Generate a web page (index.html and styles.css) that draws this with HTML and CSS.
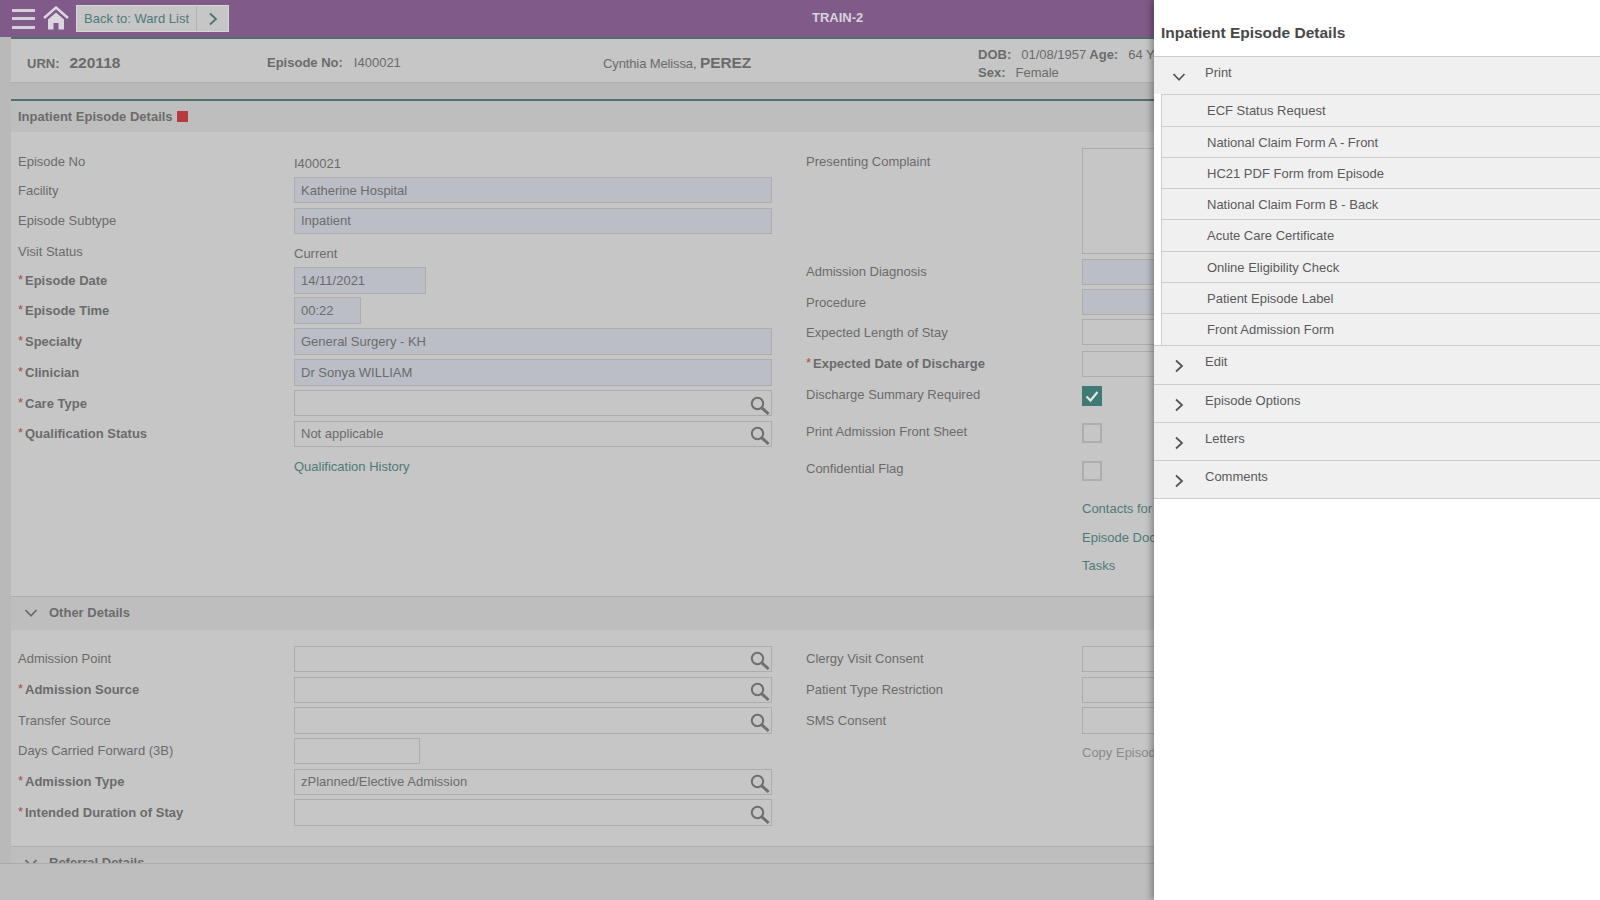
FILE: index.html
```html
<!DOCTYPE html>
<html lang="en">
<head>
    <meta charset="UTF-8">
    <meta name="viewport" content="width=device-width, initial-scale=1.0">
    <title>Inpatient Episode Details</title>
    <link rel="stylesheet" href="styles.css">
</head>
<body>
    <svg class="icon-defs" width="0" height="0" aria-hidden="true">
        <symbol id="search" viewBox="0 0 20 20">
            <circle cx="7.5" cy="7.5" r="5.7" fill="none" stroke="currentColor" stroke-width="2"/>
            <path d="M11.8 11.8 L18.6 18" fill="none" stroke="currentColor" stroke-width="3"/>
        </symbol>
        <symbol id="chev-down" viewBox="0 0 14 14">
            <path d="M1.5 4 L7 9.8 L12.5 4" fill="none" stroke="currentColor" stroke-width="1.8"/>
        </symbol>
        <symbol id="chev-right" viewBox="0 0 14 14">
            <path d="M4 1.5 L10 7 L4 12.5" fill="none" stroke="currentColor" stroke-width="1.8"/>
        </symbol>
    </svg>

    <header class="topbar">
        <div class="menu-btn"><span></span><span></span><span></span></div>
        <svg class="home" viewBox="0 0 26 24" width="26" height="24">
            <path d="M1 12 L13 1.5 L25 12" fill="none" stroke="currentColor" stroke-width="2.4"/>
            <path d="M5 13.5 L13 6.5 L21 13.5 V23.5 H15.5 V17 H10.5 V23.5 H5 Z" fill="currentColor"/>
        </svg>
        <div class="back-btn">
            <span class="back-label">Back to: Ward List</span>
            <span class="back-arrow"><svg width="14" height="14"><use href="#chev-right"/></svg></span>
        </div>
        <div class="env-name">TRAIN-2</div>
    </header>

    <main class="page">
        <div class="patient-bar">
            <div class="pt-urn"><b class="pt-key">URN:</b><b class="pt-big">220118</b></div>
            <div class="pt-episode"><b class="pt-key">Episode No:</b><span>I400021</span></div>
            <div class="pt-name">Cynthia Melissa, <b class="pt-big">PEREZ</b></div>
            <div class="pt-demo">
                <div><b class="pt-key">DOB:</b><span class="pt-val">01/08/1957</span><b class="pt-key">Age:</b><span class="pt-val">64 Years</span></div>
                <div><b class="pt-key">Sex:</b><span class="pt-val">Female</span></div>
            </div>
        </div>
        <div class="bar-gap"></div>

        <section class="episode">
            <h2 class="section-head first">Inpatient Episode Details <i class="red-flag"></i></h2>
            <div class="details">
                <div class="form-col main-left">
                    <div class="row"><label>Episode No</label><span class="value">I400021</span></div>
                    <div class="row"><label>Facility</label><div class="field filled">Katherine Hospital</div></div>
                    <div class="row up"><label>Episode Subtype</label><div class="field filled">Inpatient</div></div>
                    <div class="row"><label>Visit Status</label><span class="value">Current</span></div>
                    <div class="row h27"><label class="req">Episode Date</label><div class="field filled w-date">14/11/2021</div></div>
                    <div class="row h27"><label class="req">Episode Time</label><div class="field filled w-time">00:22</div></div>
                    <div class="row h27"><label class="req">Specialty</label><div class="field filled">General Surgery - KH</div></div>
                    <div class="row h27"><label class="req">Clinician</label><div class="field filled">Dr Sonya WILLIAM</div></div>
                    <div class="row"><label class="req">Care Type</label><div class="field"><svg class="search"><use href="#search"/></svg></div></div>
                    <div class="row up"><label class="req">Qualification Status</label><div class="field">Not applicable<svg class="search"><use href="#search"/></svg></div></div>
                    <div class="row up"><span></span><a class="link">Qualification History</a></div>
                </div>
                <div class="form-col main-right">
                    <div class="row tall"><label>Presenting Complaint</label><div class="field area"></div></div>
                    <div class="row up"><label>Admission Diagnosis</label><div class="field filled"></div></div>
                    <div class="row"><label>Procedure</label><div class="field filled"></div></div>
                    <div class="row"><label>Expected Length of Stay</label><div class="field"></div></div>
                    <div class="row up"><label class="req">Expected Date of Discharge</label><div class="field"></div></div>
                    <div class="row check"><label>Discharge Summary Required</label><div class="box on"><svg viewBox="0 0 20 20" width="20" height="20"><path d="M4.5 10.5 L8.5 14.5 L15.5 6" fill="none" stroke="#dfe6e5" stroke-width="2.2"/></svg></div></div>
                    <div class="row check"><label>Print Admission Front Sheet</label><div class="box"></div></div>
                    <div class="row check up"><label>Confidential Flag</label><div class="box"></div></div>
                    <div class="row"><span></span><a class="link">Contacts for Episode</a></div>
                    <div class="row"><span></span><a class="link">Episode Documents</a></div>
                    <div class="row"><span></span><a class="link">Tasks</a></div>
                </div>
            </div>

            <h2 class="section-head"><svg class="head-chev"><use href="#chev-down"/></svg>Other Details</h2>
            <div class="details other">
                <div class="form-col other-left">
                    <div class="row up"><label>Admission Point</label><div class="field"><svg class="search"><use href="#search"/></svg></div></div>
                    <div class="row up"><label class="req">Admission Source</label><div class="field"><svg class="search"><use href="#search"/></svg></div></div>
                    <div class="row h27"><label>Transfer Source</label><div class="field"><svg class="search"><use href="#search"/></svg></div></div>
                    <div class="row up"><label>Days Carried Forward (3B)</label><div class="field w-days"></div></div>
                    <div class="row up"><label class="req">Admission Type</label><div class="field">zPlanned/Elective Admission<svg class="search"><use href="#search"/></svg></div></div>
                    <div class="row h27"><label class="req">Intended Duration of Stay</label><div class="field"><svg class="search"><use href="#search"/></svg></div></div>
                </div>
                <div class="form-col other-right">
                    <div class="row up"><label>Clergy Visit Consent</label><div class="field"></div></div>
                    <div class="row up"><label>Patient Type Restriction</label><div class="field"></div></div>
                    <div class="row h27"><label>SMS Consent</label><div class="field"></div></div>
                    <div class="row up"><span></span><a class="link muted">Copy Episode</a></div>
                </div>
            </div>

            <h2 class="section-head"><svg class="head-chev"><use href="#chev-down"/></svg>Referral Details</h2>
        </section>
    </main>

    <footer class="footer"></footer>

    <aside class="side-panel">
        <h1 class="panel-title">Inpatient Episode Details</h1>
        <div class="acc-head"><svg width="14" height="14"><use href="#chev-down"/></svg><span>Print</span></div>
        <ul class="acc-items">
            <li>ECF Status Request</li>
            <li>National Claim Form A - Front</li>
            <li>HC21 PDF Form from Episode</li>
            <li>National Claim Form B - Back</li>
            <li>Acute Care Certificate</li>
            <li>Online Eligibility Check</li>
            <li>Patient Episode Label</li>
            <li>Front Admission Form</li>
        </ul>
        <div class="acc-head"><svg width="14" height="14"><use href="#chev-right"/></svg><span>Edit</span></div>
        <div class="acc-head"><svg width="14" height="14"><use href="#chev-right"/></svg><span>Episode Options</span></div>
        <div class="acc-head"><svg width="14" height="14"><use href="#chev-right"/></svg><span>Letters</span></div>
        <div class="acc-head"><svg width="14" height="14"><use href="#chev-right"/></svg><span>Comments</span></div>
    </aside>
</body>
</html>
```

FILE: styles.css
```css
html, body {
    height: 100%;
}

body {
    margin: 0;
    display: flex;
    flex-direction: column;
    overflow: hidden;
    background-color: #b9b9b9;
    color: #6b6b6b;
    font-family: "Liberation Sans", Arial, sans-serif;
    font-size: 13px;
}

.icon-defs {
    position: absolute;
}

/* top bar */
.topbar {
    height: 37px;
    flex: none;
    display: flex;
    align-items: center;
    position: relative;
    background-color: #805a88;
    color: #dcd6df;
}

.menu-btn {
    width: 23px;
    margin-left: 12px;
    display: flex;
    flex-direction: column;
    gap: 5.5px;
}

.menu-btn span {
    height: 3px;
    background-color: #d6cfd9;
}

.home {
    margin-left: 8px;
    margin-top: -2px;
}

.back-btn {
    height: 27px;
    box-sizing: border-box;
    margin-left: 7px;
    display: flex;
    align-items: center;
    background-color: #c6c6c6;
    border: 1px solid #d6d6d6;
    color: #4e7a76;
}

.back-label {
    padding: 0 7px;
    line-height: 25px;
    border-right: 1px solid #b2b2b2;
}

.back-arrow {
    width: 31px;
    display: flex;
    justify-content: center;
    color: #47746f;
}

.env-name {
    position: absolute;
    left: 812px;
    top: 10px;
    font-weight: bold;
    color: #d9d3dc;
}

/* main page */
.page {
    flex: 1;
    min-height: 0;
    overflow: hidden;
    margin-left: 11px;
    border-top: 2px solid #4f6f70;
}

.patient-bar {
    height: 39px;
    box-sizing: content-box;
    display: grid;
    grid-template-columns: 240px 336px 375px 1fr;
    align-items: center;
    padding: 4px 0 0 16px;
    background-color: #c6c6c6;
    border-bottom: 1px solid #b0b0b0;
}

.pt-key {
    margin-right: 10px;
    font-weight: bold;
}

.pt-big {
    font-size: 15.5px;
}

.pt-episode span {
    margin-left: 1px;
}

.pt-name {
    letter-spacing: -0.12px;
}

.pt-demo {
    line-height: 18px;
    padding-top: 2px;
}

.pt-val {
    margin-right: 3px;
}

.bar-gap {
    height: 16px;
    background-color: #b9b9b9;
}

.episode {
    border-top: 2px solid #4f6f70;
    background-color: #c6c6c6;
}

.section-head {
    height: 31px;
    box-sizing: content-box;
    margin: 0;
    display: flex;
    align-items: center;
    padding: 0 0 2px 13px;
    border-top: 1px solid #adadad;
    background-color: #bebebe;
    font-size: 13px;
}

.section-head.first {
    height: 31px;
    padding: 0 0 0 7px;
    border-top: none;
    white-space: pre;
}

.red-flag {
    width: 11px;
    height: 11px;
    margin-left: 1px;
    background-color: #b63a3e;
}

.head-chev {
    width: 14px;
    height: 14px;
    margin-right: 11px;
}

.details {
    display: grid;
    grid-template-columns: 754px 1fr;
    column-gap: 34px;
    height: 464px;
    box-sizing: border-box;
    padding: 16px 0 0 7px;
}

.details.other {
    height: 216px;
}

.form-col {
    display: grid;
    align-content: start;
}

.main-left {
    grid-template-rows: 29px 31px 30px 29px 30px 31px 31px 31px 31px 33px 26px;
}

.main-right {
    grid-template-rows: 111px 30px 30px 32px 35px 37px 38px 34px 29px 28px 26px;
}

.other-left {
    grid-template-rows: 31px 30px 31px 31px 30px 27px;
}

.other-right {
    grid-template-rows: 31px 30px 33px 26px;
}

.row {
    display: grid;
    grid-template-columns: 276px 478px;
    align-items: center;
    height: 26px;
}

.row.h27,
.row.h27 .field {
    height: 27px;
}

.row.tall {
    height: 106px;
    align-items: start;
}

.row.tall label {
    line-height: 28px;
}

.row.check {
    height: 20px;
    grid-template-rows: 20px;
}

.row.check label {
    padding-bottom: 4px;
}

.row.up label,
.row.up .link,
.row.up .field {
    padding-bottom: 2px;
}

.row.check.up label {
    padding-bottom: 6px;
}

label.req {
    position: relative;
    padding-left: 7px;
    font-weight: bold;
}

label.req::before {
    content: "*";
    position: absolute;
    left: 0;
    top: -1px;
    font-weight: normal;
    color: #a94a4a;
}

.value {
    padding-top: 4px;
}

.field {
    height: 26px;
    box-sizing: border-box;
    display: flex;
    align-items: center;
    justify-content: space-between;
    padding: 0 1px 0 6px;
    border: 1px solid #adadad;
    background-color: #c6c6c6;
}

.field.filled {
    background-color: #bbbec6;
}

.field.area {
    height: 106px;
}

.w-date {
    width: 132px;
}

.w-time {
    width: 67px;
}

.w-days {
    width: 126px;
}

.search {
    width: 20px;
    height: 20px;
    margin-left: auto;
    margin-top: 5px;
    color: #6e6e6e;
}

.row.up .search {
    margin-top: 6px;
}

.link {
    color: #4e7a76;
}

.link.muted {
    color: #8a8a8a;
}

.box {
    width: 20px;
    height: 20px;
    box-sizing: border-box;
    border: 2px solid #adadad;
}

.box.on {
    border: none;
    background-color: #3f7a74;
}

.footer {
    height: 36px;
    flex: none;
    background-color: #bebebe;
    border-top: 1px solid #ababab;
}

/* side panel, lies over the page */
.side-panel {
    position: absolute;
    top: 0;
    right: 0;
    bottom: 0;
    width: 446px;
    background-color: #fff;
    box-shadow: -3px 0 6px rgba(0, 0, 0, 0.3);
    color: #5a5a5a;
}

.panel-title {
    height: 56px;
    margin: 0;
    padding-left: 7px;
    box-sizing: border-box;
    line-height: 65px;
    font-size: 15.5px;
    color: #484848;
}

.acc-head {
    height: 38.25px;
    box-sizing: border-box;
    display: flex;
    padding-left: 18px;
    background-color: #f0f0f0;
    border-top: 1px solid #ccc;
}

.acc-head svg {
    margin-top: 13px;
    margin-right: 19px;
    color: #555;
}

.acc-head span {
    padding-top: 8px;
    line-height: 16px;
}

.acc-head:last-child {
    height: 39px;
    border-bottom: 1px solid #ccc;
}

.acc-items {
    margin: 0;
    padding: 0;
    list-style: none;
    margin-left: 7px;
    border-left: 1px solid #ccc;
    border-top: 1px solid #ccc;
}

.acc-items li {
    height: 31.25px;
    box-sizing: border-box;
    padding-left: 45px;
    line-height: 31px;
    background-color: #f0f0f0;
    border-bottom: 1px solid #ccc;
}

.acc-items li:last-child {
    border-bottom: none;
}
```
